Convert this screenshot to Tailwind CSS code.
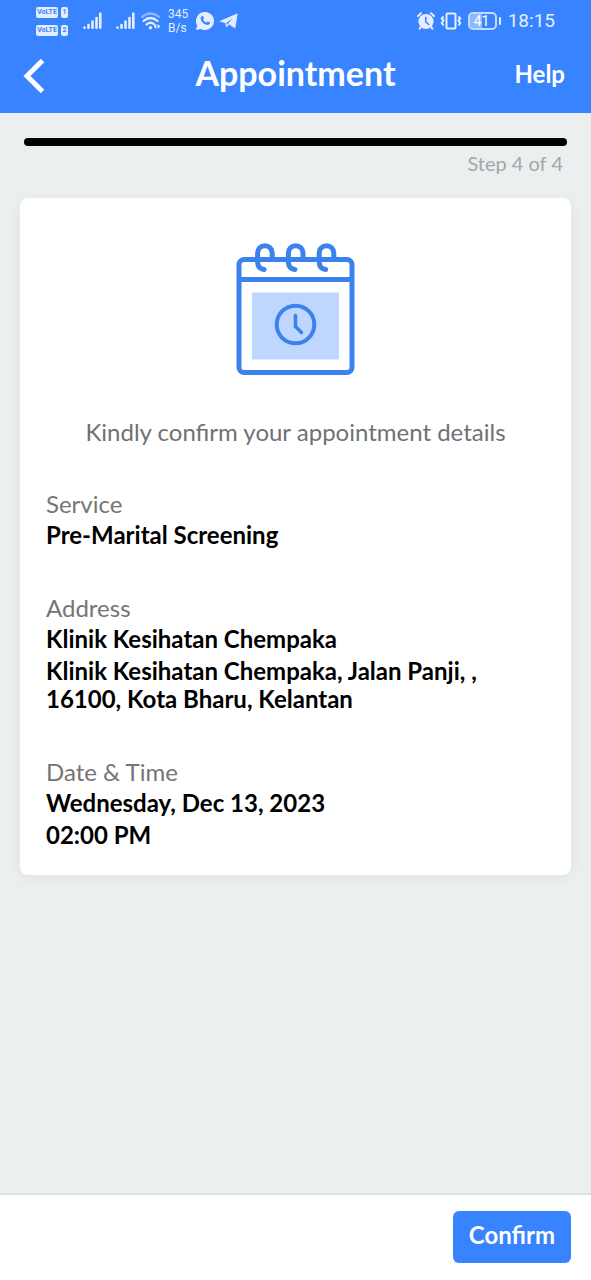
<!DOCTYPE html>
<html lang="en">
<head>
<meta charset="utf-8">
<meta name="viewport" content="width=device-width, initial-scale=1">
<title>Appointment</title>
<script src="https://cdn.jsdelivr.net/npm/@tailwindcss/browser@4"></script>
</head>
<body class="flex min-h-screen flex-col bg-[#ebeff0] font-['Lato',sans-serif] text-black">
<header class="bg-[#3883ff] text-white">
  <!-- Device status bar -->
  <div class="flex h-[42px] items-center justify-between px-9 font-['Roboto',sans-serif] text-[#e4eeff]">
    <div class="flex items-center">
      <div class="flex flex-col gap-[7px] text-center text-[7px] leading-[11px] font-bold text-[#3883ff]">
        <div class="flex gap-[3px]"><span class="w-[22px] rounded-xs bg-[#e4eeff]">VoLTE</span><span class="w-[7px] rounded-xs bg-[#e4eeff]">1</span></div>
        <div class="flex gap-[3px]"><span class="w-[22px] rounded-xs bg-[#e4eeff]">VoLTE</span><span class="w-[7px] rounded-xs bg-[#e4eeff]">2</span></div>
      </div>
      <svg class="ml-[15px] h-[18px] w-[19px]" viewBox="0 0 19 18" fill="none" stroke="currentColor" stroke-width="2.6" stroke-linecap="round"><path d="M1.5 15.500v.3M5.500 13v2.800M9.500 9.500v6.300M13.500 6v9.800M17.300 1.500v14.300"/></svg>
      <svg class="ml-[14px] h-[18px] w-[19px]" viewBox="0 0 19 18" fill="none" stroke="currentColor" stroke-width="2.6" stroke-linecap="round"><path d="M1.5 15.500v.3M5.500 13v2.800M9.500 9.500v6.300M13.500 6v9.800M17.300 1.500v14.300"/></svg>
      <svg class="ml-[6px] h-[18px] w-5" viewBox="0 0 20 18" fill="none" stroke="currentColor" stroke-width="2.2" stroke-linecap="round"><path d="M1 5Q9.500-2 18 5" opacity=".5"/><path d="M2.500 9Q9.500 3 16.500 9M5.500 12.500Q9.500 9 13.500 12.500"/><circle cx="9.500" cy="15.800" r="1.700" fill="currentColor" stroke="none"/><path d="M15.400 12v4.800l-2.900-2.400zM16.600 12v4.800l2.900-2.400z" fill="currentColor" stroke="none"/></svg>
      <div class="ml-[7px] text-[12px] leading-[14px]">345<br>B/s</div>
      <svg class="ml-2 h-[18px] w-[18px]" viewBox="0 0 18 18"><path d="M9 0a9 9 0 1 1-4.300 16.900L0 18l1.200-4.500A9 9 0 0 1 9 0Z" fill="currentColor"/><path d="M5.700 4.200c.5-.5 1.200-.4 1.500.2l.8 1.700-.9 1.300c.7 1.500 1.700 2.500 3.300 3.200l1.200-1.200 2 .9c.5.300.5.700.2 1.300-.8 1.500-2.400 1.800-4.100 1C7.200 11.500 5.600 9.900 4.900 7.800c-.5-1.500-.1-2.800.8-3.600Z" fill="#3883ff"/></svg>
      <svg class="ml-[6px] h-4 w-[18px]" viewBox="0 0 18 16" fill="currentColor"><path d="M17.300.8 15 15 9.300 11.300 6.500 14 5.500 9.800 0 8.300Z" stroke="currentColor" stroke-width=".6" stroke-linejoin="round"/><path d="m6.300 10 6.200-4.800-4.400 5.300-1 1.500Z" fill="#3883ff"/></svg>
    </div>
    <div class="flex items-center">
      <svg class="h-[18px] w-[18px]" viewBox="0 0 18 18" fill="none" stroke="currentColor" stroke-width="2" stroke-linecap="round"><circle cx="9" cy="9.500" r="7.600" fill="currentColor" stroke="none"/><path d="M1 4 4 1.200M17 4 14 1.200M3.700 15l-1 1.800M14.300 15l1 1.800"/><path d="M8.800 5.500V10l3 2.500" stroke="#3883ff" stroke-width="1.600"/></svg>
      <svg class="ml-[5px] h-[18px] w-[22px]" viewBox="0 0 22 18" fill="none" stroke="currentColor" stroke-width="2"><rect x="6.500" y="1.500" width="9" height="15" rx="1"/><path d="M3.500 4.500 1.800 6.500l1.700 2-1.700 2.500 1.700 2.500M18.500 4.500l1.700 2-1.700 2 1.700 2.500-1.700 2.500"/></svg>
      <div class="ml-[6px] flex items-center gap-0.5">
        <div class="flex h-[18px] w-[29px] items-center rounded-[5px] border-2 border-[#c3daff] bg-linear-to-r from-[#8db9ff] from-50% to-[#3883ff] to-50% bg-clip-padding pl-1 text-[14px] leading-none text-white">41</div>
        <div class="h-2 w-0.5 rounded-full bg-[#e4eeff]"></div>
      </div>
      <time class="ml-[7px] text-[19px] leading-6">18:15</time>
    </div>
  </div>
  <nav class="grid h-[71px] grid-cols-[1fr_auto_1fr] items-center px-[22px] pb-2">
    <button type="button" aria-label="Back" class="justify-self-start pt-1">
      <svg class="h-9 w-6" viewBox="0 0 24 36" fill="none" stroke="currentColor" stroke-width="5"><path d="M20.500 2.500 5 18l15.500 15.500"/></svg>
    </button>
    <h1 class="pb-0.5 text-[34px] leading-10 font-bold">Appointment</h1>
    <a href="#help" class="justify-self-end pr-1 text-2xl font-bold">Help</a>
  </nav>
</header>

<main class="flex-1 px-5 pt-[25px] pb-8">
  <div class="px-1">
    <div role="progressbar" aria-label="Progress" aria-valuenow="4" aria-valuemin="0" aria-valuemax="4" class="h-2 rounded-full bg-black"></div>
    <p class="mt-[3px] pr-1 text-right text-xl leading-7 text-[#a4a7a8]">Step 4 of 4</p>
  </div>
  <section class="mt-[21px] rounded-lg bg-white px-[26px] pt-[45px] pb-[26px] shadow-[0_3px_14px_rgba(0,0,0,0.06)]">
    <svg class="mx-auto h-[134px] w-[120px]" viewBox="0 0 120 134" fill="none" stroke="#3c82ef" stroke-width="5" stroke-linecap="round">
      <rect x="3" y="16.500" width="113" height="113" rx="5"/>
      <path d="M3 36.500h113" stroke-linecap="butt"/>
      <path d="M36.200 14V10a7.300 7.300 0 0 0-14.600 0v9q0 6.500 6.500 7.500M67 14V10a7.300 7.300 0 0 0-14.600 0v9q0 6.500 6.500 7.500M97.800 14V10a7.300 7.300 0 0 0-14.600 0v9q0 6.500 6.500 7.500"/>
      <rect x="16" y="49.500" width="87" height="67" fill="#bfd6ff" stroke="none"/>
      <circle cx="59.500" cy="81.500" r="18.800" stroke-width="4"/>
      <path d="M59.500 72.500v11l6 6" stroke-width="3.600"/>
    </svg>
    <p class="mt-[41px] text-center text-2xl leading-7 text-[#717171]">Kindly confirm your appointment details</p>
    <dl class="mt-11 flex flex-col gap-[45px] text-2xl leading-7">
      <div>
        <dt class="text-[#757575]">Service</dt>
        <dd class="mt-[3px] font-bold">Pre-Marital Screening</dd>
      </div>
      <div>
        <dt class="text-[#757575]">Address</dt>
        <dd class="mt-[3px] font-bold">Klinik Kesihatan Chempaka</dd>
        <dd class="mt-1 font-bold">Klinik Kesihatan Chempaka, Jalan Panji, ,<br>16100, Kota Bharu, Kelantan</dd>
      </div>
      <div>
        <dt class="text-[#757575]">Date &amp; Time</dt>
        <dd class="mt-[3px] font-bold">Wednesday, Dec 13, 2023</dd>
        <dd class="mt-1 font-bold">02:00 PM</dd>
      </div>
    </dl>
  </section>
</main>

<footer class="flex justify-end border-t-2 border-[#dde1e5] bg-white px-5 pt-4 pb-[17px]">
  <button type="button" class="h-[52px] rounded-md bg-[#3883ff] px-4 pb-1 text-2xl font-bold text-white">Confirm</button>
</footer>
</body>
</html>
